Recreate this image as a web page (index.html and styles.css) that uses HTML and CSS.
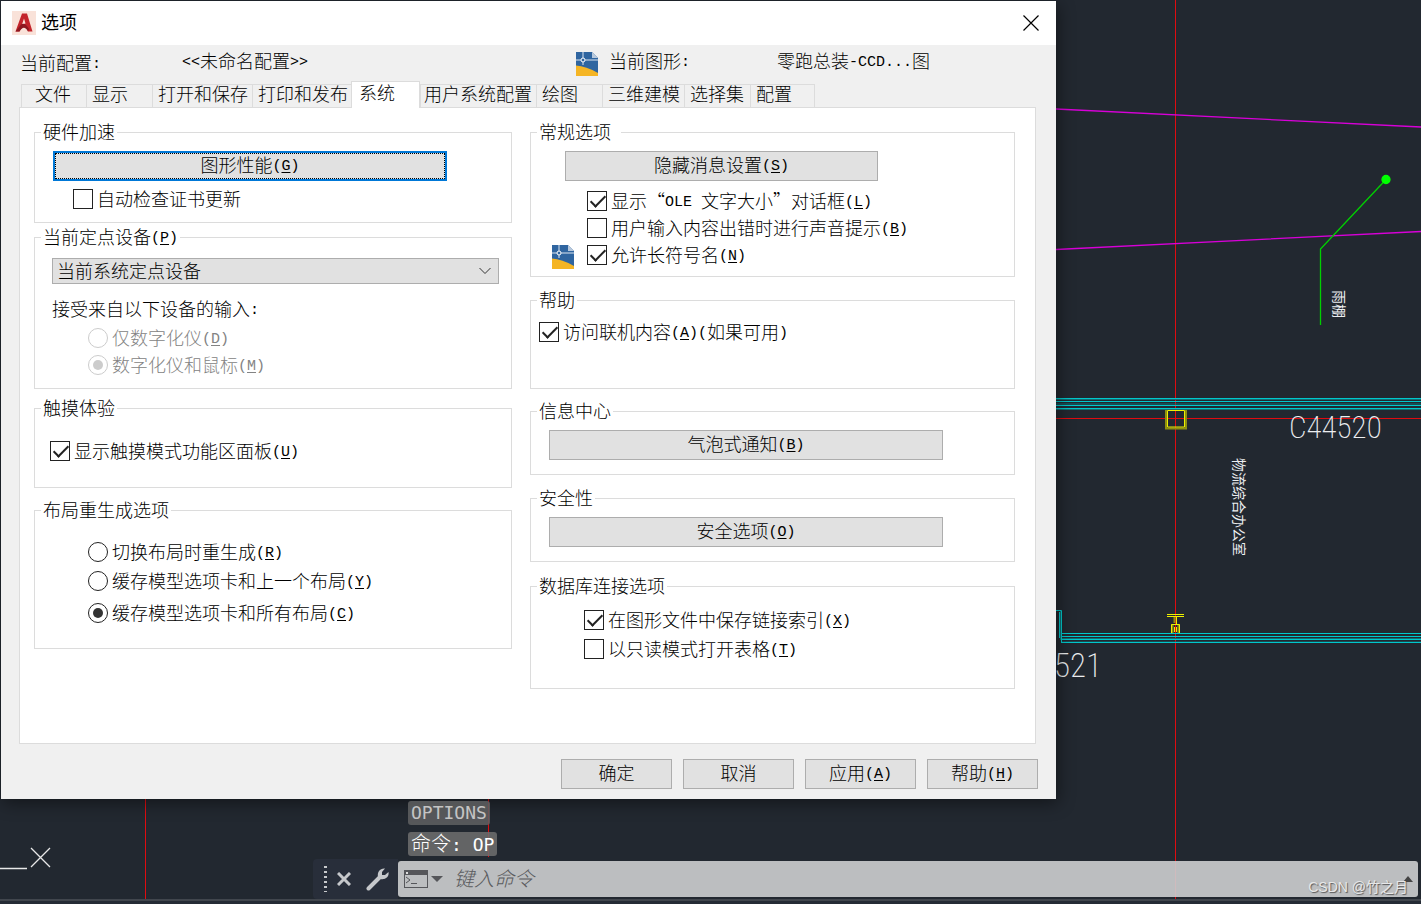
FILE: index.html
```html
<!DOCTYPE html>
<html lang="zh-CN">
<head>
<meta charset="utf-8">
<title>选项</title>
<link rel="stylesheet" href="styles.css">
</head>
<body>
<svg width="0" height="0" class="defs" aria-hidden="true">
  <symbol id="dwg" viewBox="0 0 22 24">
    <path d="M0 0H16L22 6V24H0Z" fill="#2f65a0"/>
    <path d="M16 0V6H22Z" fill="#b9c9dc"/>
    <path d="M0 13.500Q10 14 22 21V24H0Z" fill="#f5b524"/>
    <path d="M0 8H22M7 0V13" stroke="#dce6f0" stroke-width="1"/>
    <circle cx="7" cy="8" r="2" fill="#2f65a0" stroke="#fff"/>
  </symbol>
</svg>
<main class="desktop">
  <svg class="drawing" aria-label="图纸">
    <g class="axis">
      <rect x="1175" y="0" width="1" height="899"/>
      <rect x="1056" y="418" width="1400" height="1"/>
      <rect x="145" y="799" width="1" height="100"/>
      <rect x="488" y="799" width="1" height="58"/>
    </g>
    <g class="magenta"><path d="M1056 109L1421 127M1056 249.500L1421 231.500"/></g>
    <g class="green">
      <path d="M1386 179.500L1320.500 249V325"/>
      <circle cx="1386" cy="179.500" r="4"/>
    </g>
    <g class="cyan-dim"><path d="M1056 399.500H2400M1056 404H2400M1056 409.500H2400M1060.500 610V640M1061 638.500H2400M1061 642H2400"/></g>
    <g class="cyan"><path d="M1056 398.500H2400M1056 401.500H2400M1056 405.500H2400M1056 408.500H2400M1061 633.500H2400M1061 636.500H2400M1061 639.500H2400M1061 642.500H2400M1056 610.500H1061.500V642M1059.500 612V638"/></g>
    <g class="yellow-dim"><path d="M1166 410V428.500H1186V410M1174.500 617V623M1172.500 624V633M1178.500 624V633"/></g>
    <g class="yellow"><path d="M1167.500 410.500H1184.500V427H1167.500ZM1167 614.500H1184M1167 616.500H1184M1176.500 617V624M1171.500 633V624.500H1179.500V633M1174.500 627V632M1176.500 627V632"/></g>
    <text class="cad-number" x="1289" y="438">C44520</text>
    <text class="cad-number cad-large" x="1054" y="677">521</text>
    <text class="cad-note" transform="translate(1234 458) rotate(90)">物流综合办公室</text>
    <text class="cad-note" transform="translate(1334 290) rotate(90)">雨棚</text>
    <path class="ucs" d="M0 868.500H27M31 848L50 867M50 848L31 867"/>
  </svg>

  <section class="dialog" role="dialog" aria-labelledby="dialog-title">
    <header class="titlebar">
      <svg class="logo" viewBox="0 0 24 24" aria-hidden="true">
        <rect width="24" height="24" fill="#f9e2d9"/>
        <path d="M3.500 20.500L10 2.500H15L20.500 20.500H16L14.500 16Q11 14 7.500 20.500ZM10 13.500L13.500 12.500L12 7.500Z" fill="#c3242b"/>
        <path d="M3.500 20.500L9 13.500Q13 11 17 18L16 20.500Q12 13 7.500 20.500Z" fill="#8e1720"/>
      </svg>
      <h1 id="dialog-title">选项</h1>
      <button class="close" type="button" aria-label="关闭">
        <svg viewBox="0 0 16 16"><path d="M0.500 0.500L15.500 15.500M15.500 0.500L0.500 15.500"/></svg>
      </button>
    </header>

    <div class="info">
      <span class="info-profile">当前配置<span class="k">:</span></span>
      <span><span class="k">&lt;&lt;</span>未命名配置<span class="k">&gt;&gt;</span></span>
      <svg class="dwg"><use href="#dwg"/></svg>
      <span>当前图形<span class="k">:</span></span>
      <span>零跑总装<span class="k">-CCD...</span>图</span>
    </div>

    <div class="tabs" role="tablist">
      <button type="button" role="tab" class="tab tab-first">文件</button>
      <button type="button" role="tab" class="tab">显示</button>
      <button type="button" role="tab" class="tab">打开和保存</button>
      <button type="button" role="tab" class="tab">打印和发布</button>
      <button type="button" role="tab" class="tab tab-active" aria-selected="true">系统</button>
      <button type="button" role="tab" class="tab tab-tight">用户系统配置</button>
      <button type="button" role="tab" class="tab">绘图</button>
      <button type="button" role="tab" class="tab">三维建模</button>
      <button type="button" role="tab" class="tab">选择集</button>
      <button type="button" role="tab" class="tab">配置</button>
    </div>

    <div class="panel" role="tabpanel">
      <div class="column">
        <fieldset class="group accel">
          <legend>硬件加速</legend>
          <div class="body">
            <button type="button" class="btn btn-focus">图形性能<span class="k">(<u>G</u>)</span></button>
            <label class="row"><input type="checkbox"><span>自动检查证书更新</span></label>
          </div>
        </fieldset>
        <fieldset class="group pointing">
          <legend>当前定点设备<span class="k">(<u>P</u>)</span></legend>
          <div class="body">
            <div class="combo">
              <select aria-label="当前定点设备"><option>当前系统定点设备</option></select>
              <svg viewBox="0 0 12 8" aria-hidden="true"><path d="M0.500 1L6 6.500L11.500 1"/></svg>
            </div>
            <p class="caption">接受来自以下设备的输入<span class="k">:</span></p>
            <label class="row off"><input type="radio" name="input" disabled><span>仅数字化仪<span class="k">(<u>D</u>)</span></span></label>
            <label class="row off"><input type="radio" name="input" disabled checked><span>数字化仪和鼠标<span class="k">(<u>M</u>)</span></span></label>
          </div>
        </fieldset>
        <fieldset class="group touch">
          <legend>触摸体验</legend>
          <div class="body">
            <label class="row"><input type="checkbox" checked><span>显示触摸模式功能区面板<span class="k">(<u>U</u>)</span></span></label>
          </div>
        </fieldset>
        <fieldset class="group regen">
          <legend>布局重生成选项</legend>
          <div class="body">
            <label class="row"><input type="radio" name="regen"><span>切换布局时重生成<span class="k">(<u>R</u>)</span></span></label>
            <label class="row"><input type="radio" name="regen"><span>缓存模型选项卡和上一个布局<span class="k">(<u>Y</u>)</span></span></label>
            <label class="row row-apart"><input type="radio" name="regen" checked><span>缓存模型选项卡和所有布局<span class="k">(<u>C</u>)</span></span></label>
          </div>
        </fieldset>
      </div>

      <div class="column">
        <fieldset class="group general">
          <legend class="legend-wide">常规选项</legend>
          <div class="body">
            <button type="button" class="btn">隐藏消息设置<span class="k">(<u>S</u>)</span></button>
            <label class="row"><input type="checkbox" checked><span>显示<span class="quote open">“</span><span class="k">OLE </span>文字大小<span class="quote">”</span>对话框<span class="k">(<u>L</u>)</span></span></label>
            <label class="row"><input type="checkbox"><span>用户输入内容出错时进行声音提示<span class="k">(<u>B</u>)</span></span></label>
            <div class="saved">
              <svg class="dwg"><use href="#dwg"/></svg>
              <label class="row"><input type="checkbox" checked><span>允许长符号名<span class="k">(<u>N</u>)</span></span></label>
            </div>
          </div>
        </fieldset>
        <fieldset class="group help">
          <legend>帮助</legend>
          <div class="body">
            <label class="row"><input type="checkbox" checked><span>访问联机内容<span class="k">(<u>A</u>)(</span>如果可用<span class="k">)</span></span></label>
          </div>
        </fieldset>
        <fieldset class="group single info-center">
          <legend>信息中心</legend>
          <div class="body">
            <button type="button" class="btn">气泡式通知<span class="k">(<u>B</u>)</span></button>
          </div>
        </fieldset>
        <fieldset class="group single security">
          <legend>安全性</legend>
          <div class="body">
            <button type="button" class="btn">安全选项<span class="k">(<u>O</u>)</span></button>
          </div>
        </fieldset>
        <fieldset class="group database">
          <legend>数据库连接选项</legend>
          <div class="body">
            <label class="row"><input type="checkbox" checked><span>在图形文件中保存链接索引<span class="k">(<u>X</u>)</span></span></label>
            <label class="row"><input type="checkbox"><span>以只读模式打开表格<span class="k">(<u>T</u>)</span></span></label>
          </div>
        </fieldset>
      </div>
    </div>

    <footer class="actions">
      <button type="button" class="btn">确定</button>
      <button type="button" class="btn">取消</button>
      <button type="button" class="btn">应用<span class="k">(<u>A</u>)</span></button>
      <button type="button" class="btn">帮助<span class="k">(<u>H</u>)</span></button>
    </footer>
  </section>

  <div class="history">
    <p class="old">OPTIONS</p>
    <p><span class="history-cjk">命令</span>: OP</p>
  </div>

  <div class="command">
    <div class="tools">
      <span class="grip"></span>
      <button type="button" aria-label="关闭命令行"><svg class="cross" viewBox="0 0 14 14"><path d="M1 1L13 13M13 1L1 13"/></svg></button>
      <button type="button" aria-label="自定义"><svg class="wrench" viewBox="0 0 24 24"><path d="M2.500 21.500L14 10" stroke="#c6c8cb" stroke-width="4" stroke-linecap="round"/><path d="M12 10C11 5 14 1 19 1.500L16 5V8H19L22.500 5C23.500 10 19 13 14.500 12Z" fill="#c6c8cb"/></svg></button>
    </div>
    <div class="prompt">
      <button type="button" aria-label="最近使用的命令">
        <svg class="terminal" viewBox="0 0 40 18">
          <rect x="0.500" y="0.500" width="23" height="17" fill="none" stroke="#55565a"/>
          <path d="M0 0H24V5H0Z" fill="#55565a"/><path d="M2 2H4V4H2Z" fill="#ddd"/>
          <path d="M2 7L6 10L2 13M7 13.500H13" fill="none" stroke="#55565a"/>
          <path d="M27 6H39L33 12Z" fill="#55565a"/>
        </svg>
      </button>
      <input type="text" aria-label="命令" placeholder="键入命令">
      <svg class="up" viewBox="0 0 10 6"><path d="M0 6L5 0L10 6Z"/></svg>
    </div>
  </div>
  <div class="statusbar"></div>
  <span class="watermark">CSDN @竹之月</span>
</main>
</body>
</html>
```
FILE: styles.css
```css
* { box-sizing: border-box; }

body {
  margin: 0;
  background: #222830;
  color: #000;
  font: 300 18px/20px "Noto Sans CJK SC", sans-serif;
}

button, input, select { font: inherit; color: inherit; margin: 0; }
button { padding: 0; border: 0; background: none; }
p { margin: 0; }
.defs { position: absolute; }

.k {
  font-family: "Liberation Mono", monospace;
  font-size: 15px;
  line-height: 0;
  vertical-align: 2px;
  white-space: pre;
}
.k u { text-underline-offset: 2px; }
.quote { display: inline-block; width: 18px; }
.quote.open { text-align: right; }

.desktop {
  position: relative;
  display: flex;
  flex-direction: column;
  min-height: 100vh;
  overflow: hidden;
}

/* drawing area */
.drawing { position: absolute; inset: 0; width: 100%; height: 100%; fill: none; }
.axis { fill: #e00c10; }
.magenta { stroke: #d800d8; stroke-width: 1.3; }
.green { stroke: #00d000; stroke-width: 1.3; }
.green circle { fill: #00ff00; stroke: #00ff00; }
.cyan { stroke: #00c8cc; }
.cyan-dim { stroke: #126c72; }
.yellow { stroke: #eef000; }
.yellow-dim { stroke: #8f9010; stroke-width: 2; }
.ucs { stroke: #e8e8e8; stroke-width: 1.3; }
.cad-number { fill: #eceef0; font: 200 31px "Roboto Condensed", "Liberation Sans Narrow", Roboto, sans-serif; }
.cad-large { font-size: 33px; }
.cad-note { fill: #eceef0; font: 400 14px "Noto Sans CJK SC", sans-serif; }

/* dialog */
.dialog {
  position: relative;
  margin: 1px 365px 0 1px;
  min-width: 1055px;
  background: #f0f0f0;
  box-shadow: 2px 4px 16px rgba(0, 0, 0, 0.45);
}
.titlebar { display: flex; align-items: center; height: 44px; padding: 0 17px 0 11px; background: #fff; }
.logo { width: 24px; height: 24px; }
.titlebar h1 { flex: 1; margin: 0 0 0 5px; padding-bottom: 4px; font-size: 18px; font-weight: 400; }
.close { width: 16px; height: 16px; }
.close svg { display: block; fill: none; stroke: #000; stroke-width: 1.2; }

.info {
  display: grid;
  grid-template-columns: 162px 394px 33px 168px 1fr;
  height: 36px;
  padding: 5px 0 0 19px;
}
.info-profile { padding-top: 2px; }
.dwg { width: 22px; height: 24px; }
.info .dwg { margin-top: 2px; }

.tabs {
  display: grid;
  grid-template-columns: 65px 66px 100px 99px 69px 116px 66px 82px 66px 65px;
  align-items: end;
  height: 26px;
  margin-left: 20px;
}
.tab {
  height: 23px;
  padding: 0 0 5px 5px;
  border: 1px solid #dcdcdc;
  border-width: 1px 0 0 1px;
  line-height: 17px;
  text-align: left;
  white-space: nowrap;
}
.tab:last-child { border-right-width: 1px; }
.tab-first { padding-left: 13px; }
.tab-tight { padding-left: 3px; }
.tab-active {
  position: relative;
  height: 27px;
  margin-bottom: -1px;
  padding: 0 0 6px 7px;
  border-right-width: 1px;
  background: #fff;
}

.panel {
  display: grid;
  grid-template-columns: minmax(0, 478fr) minmax(0, 485fr);
  gap: 18px;
  margin: 0 20px 0 18px;
  padding: 15px 20px 54px 14px;
  border: 1px solid #dcdcdc;
  background: #fff;
}

.group { min-width: 0; margin: 0; padding: 0; border: 1px solid #dcdcdc; }
.group legend { height: 19px; margin-left: 6px; padding: 0 2px; line-height: 16px; }
.group .legend-wide { padding-right: 10px; }
.body { display: flex; flex-direction: column; }

.row { display: flex; align-items: center; height: 20px; white-space: nowrap; }
.row > span { padding-bottom: 2px; }
.row input {
  position: relative;
  appearance: none;
  flex: none;
  width: 20px;
  height: 20px;
  margin-right: 4px;
  border: 1px solid #222;
  background: #fff;
}
.row input[type="radio"] { border-radius: 50%; }
.row input:checked::before { content: ""; position: absolute; }
.row input[type="checkbox"]:checked::before {
  left: 6px;
  top: 0;
  width: 6px;
  height: 13px;
  border: solid #222;
  border-width: 0 2px 2px 0;
  transform: rotate(45deg);
}
.row input[type="radio"]:checked::before { inset: 4px; border-radius: 50%; background: #333; }
.row.off { color: #838383; }
.row.off input { border-color: #ccc; }
.row.off input[type="radio"]:checked::before { background: #ccc; }

.btn {
  display: block;
  height: 30px;
  padding-bottom: 3px;
  border: 1px solid #adadad;
  background: #e1e1e1;
  line-height: 25px;
  text-align: center;
}
.btn-focus { border: 2px solid #0078d7; line-height: 23px; outline: 1px dotted #000; outline-offset: -3px; }

.accel .body { padding: 9px 64px 13px 18px; }
.accel .row { margin: 8px 0 0 20px; }

.pointing { margin-top: 5px; }
.pointing .body { padding: 11px 12px 13px 17px; }
.pointing .row { margin-left: 36px; }
.pointing .row + .row { margin-top: 7px; }
.combo { position: relative; }
.combo select {
  display: block;
  appearance: none;
  width: 100%;
  height: 26px;
  padding: 0 24px 2px 4px;
  border: 1px solid #adadad;
  border-radius: 0;
  background: #e1e1e1;
}
.combo svg { position: absolute; right: 8px; top: 9px; width: 12px; height: 8px; fill: none; stroke: #333; }
.caption { height: 20px; margin: 14px 0 10px; }

.touch { margin-top: 10px; }
.touch .body { padding: 23px 0 26px 15px; }
.regen { margin-top: 13px; }
.regen .body { padding: 13px 0 25px 53px; }
.regen .row { margin-top: 9px; }
.regen .row-apart { margin-top: 12px; }

.general .body { padding: 9px 136px 11px 34px; }
.general .row { margin: 7px 0 0 22px; }
.general .btn + .row { margin-top: 10px; }
.saved { display: flex; gap: 13px; height: 20px; margin: 7px 0 0 -13px; }
.general .saved .row { margin: 0; }

.help { margin-top: 14px; }
.help .body { padding: 12px 0 46px 8px; }
.single .body { padding: 9px 71px 14px 18px; }
.info-center { margin-top: 13px; }
.security { margin-top: 14px; }
.database { margin-top: 15px; }
.database .body { padding: 5px 0 29px 53px; }
.database .row { margin-top: 9px; }

.actions { display: flex; justify-content: flex-end; gap: 11px; padding: 15px 18px 10px; }
.actions .btn { width: 111px; }

/* command line */
.history {
  position: relative;
  display: flex;
  flex-direction: column;
  align-items: flex-start;
  gap: 7px;
  margin: 2px 0 3px 408px;
  color: #fff;
  font: 18px/24px "DejaVu Sans Mono", monospace;
}
.history p { height: 24px; padding: 0 3px; border-radius: 3px; background: rgba(110, 110, 110, 0.85); white-space: pre; }
.history .old { background: rgba(95, 96, 98, 0.85); color: #c4c4c4; }
.history-cjk { font: 300 20px/22px "Noto Sans CJK SC", sans-serif; }

.command { position: relative; display: flex; align-items: center; height: 40px; margin: 0 3px 0 313px; }
.tools { display: flex; align-items: center; width: 85px; height: 40px; padding-left: 11px; border-radius: 4px 0 0 4px; background: #282e3a; }
.grip { width: 3px; height: 26px; margin-right: 10px; background: repeating-linear-gradient(#c8cacc 0 2px, transparent 2px 5px); }
.tools svg { display: block; }
.cross { width: 14px; height: 14px; margin-right: 15px; fill: none; stroke: #c6c8cb; stroke-width: 3; }
.wrench { width: 24px; height: 24px; fill: none; }
.prompt { display: flex; flex: 1; align-items: center; height: 36px; padding: 0 5px 0 6px; border-radius: 3px; background: rgba(205, 206, 208, 0.9); }
.terminal { display: block; width: 40px; height: 18px; }
.prompt input { flex: 1; min-width: 0; height: 36px; padding: 0 0 4px 10px; border: 0; background: none; outline: 0; font-size: 20px; font-style: italic; }
.prompt input::placeholder { color: #595a5d; opacity: 1; }
.up { width: 10px; height: 6px; fill: #444; }

.statusbar { position: relative; height: 5px; border-top: 2px solid #41464d; background: #252b35; }

.watermark {
  position: absolute;
  right: 13px;
  bottom: 7px;
  color: #e8e8e8;
  font: 14px/20px "Liberation Sans", "Noto Sans CJK SC", sans-serif;
  text-shadow: 1px 1px 1px #555;
}
```
